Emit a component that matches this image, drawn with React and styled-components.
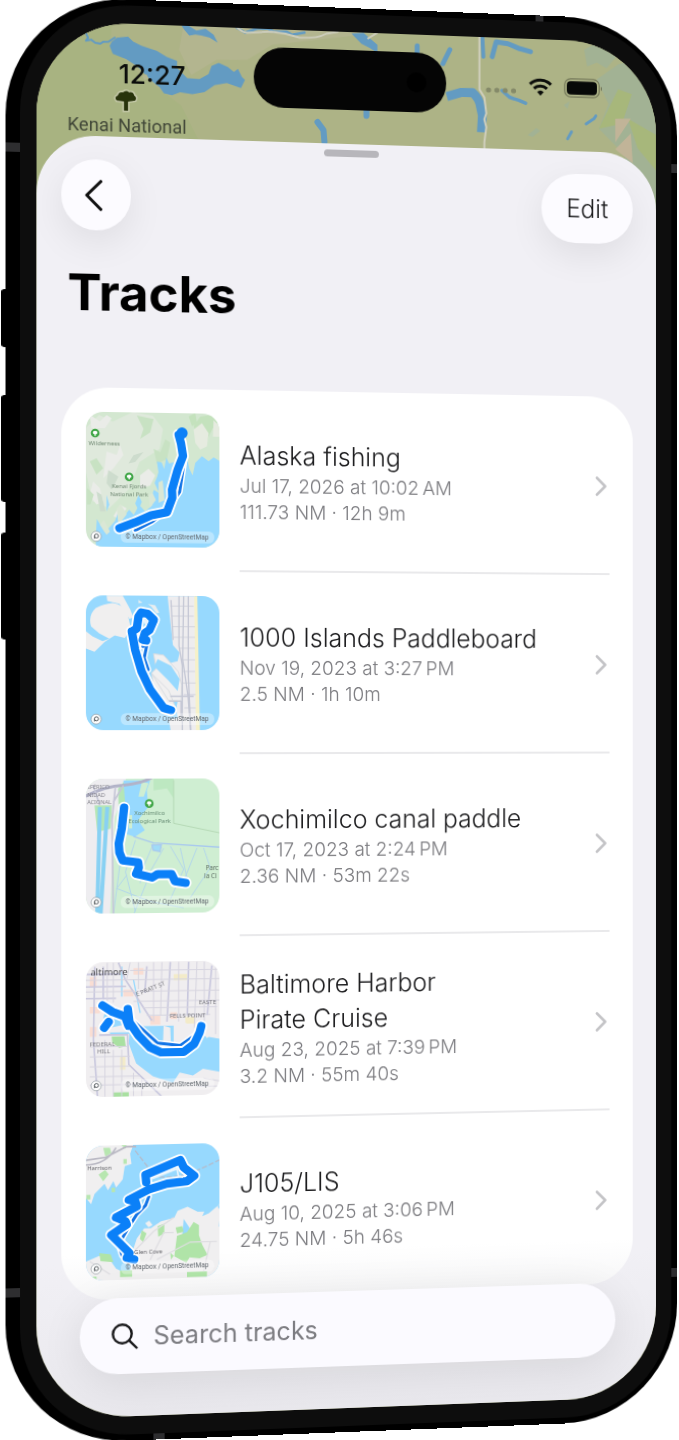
import React, { useState } from 'react'
import styled, { createGlobalStyle } from 'styled-components'

const GlobalStyle = createGlobalStyle`
  * { box-sizing: border-box; }
  body {
    margin: 0;
    background: #fff;
    font-family: Inter, "Liberation Sans", sans-serif;
    color: #1c1c1e;
  }
`

/* ---------- device ---------- */

const Stage = styled.main`
  padding: 8px 0;
  overflow: hidden;
`

const Phone = styled.div`
  position: relative;
  width: calc(100% - 6px);
  margin-left: 11px;
  padding: 6px 6px 6px 14px;
  border-radius: 118px;
  background: #000;
  transform: perspective(1274px) rotateY(4deg);
`

const Bezel = styled.div`
  padding: 18px 16px;
  border-radius: 108px;
  background: #0d0d0d;
`

const Screen = styled.div`
  position: relative;
  overflow: hidden;
  border-radius: 92px;
  background: #adb386;
`

const SideButton = styled.span`
  position: absolute;
  left: -4px;
  top: ${p => p.$top}px;
  width: 8px;
  height: ${p => p.$height}px;
  border-radius: 3px;
  background: #000;
`

const Antenna = styled.span`
  position: absolute;
  background: #2e2e30;
  ${p => p.$side === 'left' && 'left: 0; width: 14px; height: 9px;'}
  ${p => p.$side === 'right' && 'right: 0; width: 6px; height: 9px;'}
  ${p => p.$side === 'top' && 'top: 0; right: 138px; width: 8px; height: 6px;'}
  ${p => p.$side === 'bottom' && 'bottom: 0; left: 144px; width: 11px; height: 6px;'}
  ${p => p.$y && `top: ${p.$y}px;`}
`

/* ---------- status bar ---------- */

const Backdrop = styled.svg`
  position: absolute;
  top: 0;
  left: 0;
  width: 100%;
  height: 200px;
`

const StatusBar = styled.header`
  position: relative;
  display: grid;
  grid-template-columns: 1fr auto 1fr;
  align-items: center;
  padding: 18px 54px 34px 80px;
`

const Time = styled.time`
  padding-top: 4px;
  font-size: 26px;
  line-height: 30px;
  font-weight: 500;
  color: #0a0c0a;
`

const Island = styled.div`
  display: flex;
  align-items: center;
  justify-content: flex-end;
  width: 193px;
  height: 60px;
  margin-left: -28px;
  padding-right: 20px;
  border-radius: 30px;
  background: #050505;
`

const Camera = styled.span`
  width: 20px;
  height: 20px;
  border-radius: 50%;
  background: #000;
`

const Indicators = styled.div`
  display: flex;
  justify-content: flex-end;
  align-items: flex-end;
  gap: 12px;
`

/* ---------- sheet ---------- */

const Sheet = styled.section`
  position: relative;
  padding: 6px 24px 42px;
  border-radius: 58px 58px 0 0;
  background: linear-gradient(#f1f0f5 0, #f1f0f5 88%, #e9e8ed 100%);
`

const Grabber = styled.div`
  width: 55px;
  height: 7px;
  margin: 0 auto 10px;
  border-radius: 4px;
  background: #b7b6bb;
`

const Toolbar = styled.div`
  display: flex;
  justify-content: space-between;
`

const PillButton = styled.button`
  display: flex;
  align-items: center;
  justify-content: center;
  width: ${p => (p.$wide ? 94 : 68)}px;
  height: 70px;
  padding: ${p => (p.$wide ? '0' : '0 5px 0 0')};
  border: none;
  border-radius: 35px;
  background: #fcfbff;
  box-shadow: 0 12px 36px rgba(0, 0, 0, 0.08);
  font-family: inherit;
  font-size: 25px;
  font-weight: 300;
  color: #1c1c1e;
  cursor: pointer;
`

const Title = styled.h1`
  margin: 29px 6px 62px;
  font-size: 50px;
  line-height: 64px;
  font-weight: 700;
  color: #000;
`

const List = styled.ul`
  margin: 0;
  padding: 0 24px;
  list-style: none;
  border-radius: 46px;
  background: linear-gradient(#fff 0, #fff 95%, #f7f7f8 100%);
`

const Item = styled.li`
  &:last-child > a { padding-bottom: 19px; }
  &:last-child > a::after { display: none; }
`

const RowLink = styled.a`
  position: relative;
  display: flex;
  align-items: center;
  gap: 20px;
  padding: 24px 3px 24px 0;
  color: inherit;
  text-decoration: none;

  &::after {
    content: '';
    position: absolute;
    left: 151px;
    right: 0;
    bottom: 0;
    height: 2px;
    background: #e9e9eb;
  }
`

const Thumb = styled.svg`
  flex: none;
  width: 131px;
  height: 133px;
  border-radius: 17px;
`

const Details = styled.div`
  flex: 1;
  min-width: 0;
  padding-top: 2px;
`

const Name = styled.h2`
  margin: 0;
  font-size: 25px;
  line-height: 35px;
  font-weight: 300;
  color: #1c1c1e;
  white-space: pre-line;
`

const Meta = styled.p`
  margin: 0;
  font-size: 19px;
  line-height: 26px;
  font-weight: 300;
  color: #7c7c80;
`

const SearchBar = styled.label`
  position: relative;
  display: flex;
  align-items: center;
  gap: 15px;
  height: 75px;
  margin: -1px 18px 0;
  padding: 0 31px;
  border-radius: 38px;
  background: #fbfaff;
  box-shadow: 0 8px 44px rgba(0, 0, 0, 0.09);
`

const SearchInput = styled.input`
  flex: 1;
  min-width: 0;
  padding: 0;
  border: none;
  outline: none;
  background: transparent;
  font-family: inherit;
  font-size: 25px;
  color: #1c1c1e;

  &::placeholder {
    color: #7c7c81;
    opacity: 1;
  }
`

/* ---------- icons ---------- */

const BackIcon = () => (
  <svg width="17" height="31" viewBox="0 0 17 31" fill="none" stroke="#111" strokeWidth="3" strokeLinecap="round" strokeLinejoin="round" aria-hidden="true">
    <path d="M15.500 1.700 1.800 15.500l13.700 13.800" />
  </svg>
)

const ChevronIcon = () => (
  <svg width="12" height="20" viewBox="0 0 12 20" fill="none" stroke="#c3c3c6" strokeWidth="2.6" strokeLinecap="round" strokeLinejoin="round" aria-hidden="true">
    <path d="m2 1.500 8.500 8.500L2 18.500" />
  </svg>
)

const SearchIcon = () => (
  <svg width="26" height="26" viewBox="0 0 26 26" fill="none" stroke="#1a1a1c" strokeWidth="2.4" strokeLinecap="round" aria-hidden="true">
    <circle cx="10.500" cy="10.500" r="9.200" />
    <path d="m17.200 17.200 7.300 7.300" />
  </svg>
)

const WifiIcon = () => (
  <svg width="24" height="19" viewBox="0 0 24 19" fill="none" stroke="#0b0d0a" strokeWidth="3" aria-hidden="true">
    <path d="M1.200 6.600a15.500 15.500 0 0 1 21.600 0" />
    <path d="M5.300 10.900a9.700 9.700 0 0 1 13.400 0" />
    <path d="M8.600 14.300a5 5 0 0 1 6.800 0L12 18Z" fill="#0b0d0a" stroke="none" />
  </svg>
)

const BatteryIcon = () => (
  <svg width="41" height="20" viewBox="0 0 41 20" aria-hidden="true">
    <rect x="0.800" y="0.800" width="35.500" height="18.400" rx="6" fill="none" stroke="#747859" strokeWidth="1.200" />
    <rect x="3" y="3.200" width="31" height="13.600" rx="4" fill="#070907" />
    <path d="M38 7.500q2 2.500 0 5Z" fill="#62664d" />
  </svg>
)

const DotsIcon = () => (
  <svg width="32" height="10" viewBox="0 0 32 10" fill="#858a69" aria-hidden="true">
    <circle cx="3" cy="5" r="2.600" />
    <circle cx="11.500" cy="5" r="2.600" />
    <circle cx="20" cy="5" r="2.600" />
    <circle cx="28.500" cy="5" r="2.600" />
  </svg>
)

/* ---------- map behind the status bar ---------- */

const BackdropMap = () => (
  <Backdrop viewBox="0 0 620 200" preserveAspectRatio="xMinYMin slice" aria-hidden="true">
    <rect width="620" height="200" fill="#adb386" />
    <g transform="matrix(1 -0.037 0 1 -39 -19.500)">
      <path d="M30 15v190h60l110-60-20-40-40-30-30-30 5-40Z" fill="#a8b381" />
      <path d="M185 10 178 50l12 25 25-15 30 0 25-15 90-10 20-30Z" fill="#b3b58f" />
      <path d="M585 50l20-10 15 15-12 14-10-6-10 4Zm35 15 20-5 25 70v90l-30-40-10-25-25-25 10-25-12-25Z" fill="#a2b294" />
      <path d="M600 130l20-40 14 5-10 30Zm30-10 35 20v40l-25-30Z" fill="#a7b77b" />
      <path d="M617 120h16l-16 24Zm16 15 2 30-18-14Z" fill="#c1b498" />
      <path d="M540 132l-8 6-5-2 9-7Zm30-30-2 8-4-4Z" fill="#a2b294" />
      <g fill="none" stroke="#639bc2" strokeLinecap="round" strokeLinejoin="round">
        <path d="M87 34l2 4-2 3 5-1 4 3 5 1 3-2 5 0 6-4" strokeWidth="2" />
        <path d="M235 28l8 5 12-4 10 0 7 3 12 0 6 3 12-2" strokeWidth="2.500" />
        <path d="M415 46v8M448 50l-7 14" strokeWidth="5" />
        <path d="M481 38l1 19" strokeWidth="4" />
        <path d="M491 57l4-15 12 2 12 5 11 3" strokeWidth="5" />
        <path d="M501 91l8 7 9 3 7 3" strokeWidth="3.500" />
        <path d="M445 97l14-4 12 0q7 6 8 14l2 9-1 17" strokeWidth="9" strokeLinecap="butt" />
        <path d="M568 140l4-7M587 125l8-5 2-3" strokeWidth="3" />
        <path d="M315 122l6 8 1 12" strokeWidth="6" />
        <path d="M364 108v8" strokeWidth="6" />
      </g>
      <path d="M179 24l8 2 8 5 9-2 8 6 4 8-8-5-8-2-6-1-6 1-5-6Z" fill="#639bc2" />
      <path d="M349 34l12-1 8 7 6 5v8l-8-5-8-4Z" fill="#639bc2" />
      <path d="M112 42l5-4 11-1 5 5 8 4 15 5 10 6 10 4 0 7 10 10 12 1 9-5 3-8 7-3 9 4 6 5 4-3 4 8 3 3-4 8-14-5-12 2-10 7-12 2-12-2-8 3-8-2-4-6-9-7-12-13-12-8-13-5-3-8Z" fill="#639bc2" />
      <path d="M142 76l4-2 2 4-4 2Z" fill="#b3b58f" />
      <path d="M233 25q6 8 12 8l24-1 14 2 14 4q18 1 27-4l12-2" fill="none" stroke="#ccccba" strokeWidth="2" />
      <path d="M478 35v55l5 8 2 16-2 6 2 8-2 15v14" fill="none" stroke="#d0cfbd" strokeWidth="2" />
      <path d="M365 39l10-6" fill="none" stroke="#ccccba" strokeWidth="2" />
      <path
        d="M117 100q-3-3 1-5 1-4 5-3 3-3 6 0 4-1 5 3 3 2 1 5l-7 1v9h-4v-9Z"
        fill="#28330c" stroke="#c5c9a9" strokeWidth="3" paintOrder="stroke"
      />
    </g>
    <text x="30" y="107" fontFamily="Roboto, sans-serif" fontSize="18" fill="#414738">Kenai National</text>
  </Backdrop>
)

/* ---------- thumbnails ---------- */

const WATER = '#97d9fe'

const Track = ({ d, thin }) => (
  <g fill="none" strokeLinecap="round" strokeLinejoin="round">
    {thin && <path d={thin} stroke="#fff" strokeWidth="18" />}
    {thin && <path d={thin} stroke="#1173e6" strokeWidth="9" />}
    <path d={d} stroke="#fff" strokeWidth="36" />
    <path d={d} stroke="#0b80f8" strokeWidth="25" />
  </g>
)

const Park = ({ x, y }) => (
  <g>
    <circle cx={x} cy={y} r="13" fill="#3ea545" />
    <path d={`M${x} ${y - 7}q7 0 7 6 0 4-5 4v5h-4v-5q-5 0-5-4 0-6 7-6Z`} fill="#fff" />
  </g>
)

const Alaska = () => (
  <>
    <rect x="48" y="45" width="402" height="415" fill="#d3e7d0" />
    <path d="M48 100l40-40 40 20 60-30 60 10 30 40-10 60-60 40-30 80-60 60-50-20-20-90Z" fill="#dfe9dc" />
    <path d="M60 60l30 20 20-20 15 10-20 30-40 0ZM110 170l30 10 10-30 10 30-30 40-30 30Zm-40 90 20 20 10 40-20 10-20-30Zm140-20 25-20 20 20-15 30-30 10Zm-60 90 20 10-25 30-15-5Z" fill="#eaece8" />
    <path d="M200 60l20 40-10 30 30-20 10-40Zm50 100 20 10 15-40 15 10-10 50-30 15Zm-190 40 20-10 20 30-20 20Zm-8 80 20 20-10 30-10 0Z" fill="#c8e2c3" />
    <path d="M390 60l-20 30 15 40 20 20 10-30 20-40 14 0V50ZM355 60l10 30 15-10-5-30Z" fill="#c4e2bd" />
    <path d="M370 100l25-20 20 30-5 40-20 10-15-20Zm60-30 18 20v30l-20 0Z" fill="#e6ebe0" />
    <path d="M80 290l15 10 12 50-16 0ZM190 180l30-10-25 30-20 5ZM115 225l30 20-20 40-15-20Z" fill="#cddccd" />
    <path d="M450 195l-20-12-15 12-20-15-20 20-8 38-10-20-6-30-55 15-8-18-6 35-8-20-14-2 5 35-12 30 14 30-16-10-8 22 4 24-22 20-18-20-16 30-14-15-18 24-12-24-12 34-30 35-24-40-3 50v60h402Z" fill={WATER} />
    <path d="M262 240l8-30 12 40 5 50-15 20ZM205 300l10 20-10 25-10-20ZM110 300l8 30-8 20Z" fill={WATER} />
    <path d="M140 340l12-12 18 30-25 32Zm95-40 12-8 10 22-18 24Zm30-40 12-6 6 60-18 8ZM90 390l12-14 18 34-10 10Z" fill="#dae7d5" />
    <Park x={76} y={115} />
    <Park x={177} y={245} />
    <g fontSize="18" fill="#728a75" textAnchor="middle">
      <text x="103" y="151">Wilderness</text>
      <text x="177" y="280">Kenai Fjords</text>
      <text x="177" y="303">National Park</text>
    </g>
    <Track
      thin="M342 195L328 288 290 345 245 380 195 406"
      d="M325 116L332 142 338 180 322 222 305 282 306 306 290 350 243 360 195 382 148 400"
    />
    <circle cx="335" cy="111" r="17" fill="#0b80f8" />
  </>
)

const Islands = () => (
  <>
    <rect x="48" y="40" width="402" height="420" fill={WATER} />
    <path d="M78 85q22-12 50-15 30 4 44 30l10 45-18 30-30-8-30 20-30 30-26-10V155l20 15 30 15 20-8-30-16-24-20q-10-34 14-56Z" fill="#f0efef" />
    <path d="M110 48h48l22 40 10 25-12 4-30-45-36-8Z" fill="#f0efef" />
    <path d="M205 60l12 8-12 2Zm28 12 22 4 12 22-8 2-16-20Z" fill="#e8edef" />
    <path d="M292 48h82l10 412h-82l-6-40 26-4-4-30 12-60-14-60-34-12 40-10 6-26-20-22-10-90Z" fill="#eeedef" />
    <path d="M372 48h9l8 412h-12Z" fill="#f6f1c9" />
    <path d="M250 222l30 4 44 50 10 40-2 48-38-2-50-82 14-14Zm-5 60 50 50 20 50-16 12-48-60Z" fill="#f1f0f0" stroke="#d8dbe0" strokeWidth="3" />
    <path d="M262 238l40 20 26 40-6 36-28-32-42-42Z" fill={WATER} />
    <g fill="none" stroke="#c5c8d5" strokeWidth="4">
      <path d="M326 48v150l10 60v202M340 48l-3 190 16 110 8 112M354 48v240l8 172M302 60l6 120M300 350h70M296 365h36v50" />
      <path d="M300 78h70M304 108h66M306 140h68M310 172h64M326 205h48M334 240h40M336 275h38M336 310h40M340 345h36M342 385h34M330 420h50" strokeWidth="2" />
    </g>
    <Track
      thin="M218 200L230 196 222 235 234 270"
      d="M185 155L195 210 214 275 240 330 280 385 302 392M187 154L200 146 205 110 213 98 233 102 251 120 238 150 224 160 218 180 228 182"
    />
    <path d="M219 120l8-4 6 8-4 12-6-6Z" fill="#e9f4fb" />
  </>
)

const Xochimilco = () => (
  <>
    <rect x="48" y="35" width="402" height="415" fill="#cfeed2" />
    <path d="M48 35h120l-10 60-24 60-14 295H48Z" fill="#eeedf0" />
    <path d="M74 120h52l-4 70-40 10Zm70-50 20-24 14 20-12 60-20 20Z" fill="#b4e6b6" />
    <path d="M160 45h80l-10 30 4 50-30 40 20 30-30 20-30-10 4-50Z" fill={WATER} />
    <path d="M215 50l20 4-14 40-16 0ZM176 150l10 0v40l-10 0Z" fill="#cfeed2" />
    <path d="M250 40h60v60l-20-30-40 6Z" fill="#bde8c1" />
    <path d="M90 125l-8 325M112 125L92 450" stroke="#88d1f3" strokeWidth="12" fill="none" />
    <g fill="none" stroke="#a9c9ee" strokeWidth="4">
      <path d="M190 214l60 20 200 14" />
      <path d="M160 215l-10 80-20 155M196 225l-30 95 30 120M250 235l-34 80-6 40M245 240l30 8M300 244l40 70-40 90M330 250l20 90M380 250l-40 100M170 330l-30 40 100 40 100 20M230 350l-40 100M400 250l20 60-60 90M280 250l-40 70" strokeWidth="3" stroke="#b3d6ea" />
      <path d="M245 240l28 0-4 20-20-4Z" fill="#9fdcf8" />
    </g>
    <path d="M310 45v130l140 30" fill="none" stroke="#b5d8b5" strokeWidth="3" />
    <path d="M48 92q60-30 110-32 60-6 90-25" fill="none" stroke="#b2b3c8" strokeWidth="9" />
    <path d="M136 65l-10 100 4 285M160 60l-30 50M70 60l20 60" fill="none" stroke="#c5c6d6" strokeWidth="5" />
    <Park x={237} y={115} />
    <g fontSize="18" fill="#648a72" textAnchor="middle">
      <text x="238" y="150">Xochimilco</text>
      <text x="238" y="174">Ecological Park</text>
    </g>
    <g fontSize="17" fill="#85858d">
      <text x="55" y="72">IFÉRICO</text>
      <text x="52" y="95">NIDAD</text>
      <text x="52" y="117">ACIONAL</text>
    </g>
    <g fontSize="19" fill="#5c6d62">
      <text x="406" y="317">Parc</text>
      <text x="402" y="341">la Ci</text>
    </g>
    <Track d="M162 127L155 190 146 235 148 262 158 286 204 292 206 308 198 326 246 338 262 328 304 328 314 350 346 355" />
  </>
)

const Baltimore = () => (
  <>
    <rect x="48" y="40" width="402" height="420" fill="#f0eef0" />
    <path d="M60 90h20v30H60Zm0 90h30v20H60Zm100-50h30v20h-30Zm80 80h30v26h-30Zm-50-145h30v20h-30ZM60 240h20v30H60ZM300 200h20v20h-20Z" fill="#f9ddd3" />
    <path d="M310 85h40v18h-40ZM345 215h30v20h-30ZM150 330h16v40h-16Z" fill="#f3ebc9" />
    <path d="M125 270h38l4 30-20 4-20-16ZM130 438h46v14h-46Z" fill="#a9e0a1" />
    <path d="M105 192l60 14 10 26-56 12-20-20ZM180 215l40 25 90 0v50l70 12 16-30 52 10v100l-50-10-30 20-40-10-20 30-60-20-50-40-22-60Z" fill={WATER} />
    <path d="M280 240l20 6 2 52-24 0ZM340 230l24 10-14 40-24 20ZM390 250l24-20 20 30-24 20Z" fill="#f0eef0" />
    <path d="M190 100l20 100M155 60v90M120 260l60 0" stroke={WATER} strokeWidth="4" fill="none" />
    <g fill="none" stroke="#c9c8de" strokeWidth="5">
      <path d="M145 48l20 50 26 40 54 86M48 120h120M48 155h90M75 60l-4 220 12 170M88 265l84 0 4 90 50 50 50 50M300 48l-10 180M355 48l-4 160M48 82h100M230 60l-6 80M425 60l-14 150M100 60v100" />
    </g>
    <g fill="none" stroke="#d6d4e0" strokeWidth="3">
      <path d="M112 48v120M130 48v120M180 48l-10 50M205 48v80M250 48v180M275 48l-4 160M325 48v180M380 48l-8 200M402 48v180M436 48v220M48 100h400M48 135h400M180 72h268M190 165h258M220 185h220M230 208h190M60 300h110M60 330h120M60 360h120M60 390h150M60 415h170M105 280v170M130 310v140M155 310v140M190 380v70M215 400v50M400 400l50 10M380 425l70 0" />
    </g>
    <g fill="#77777e">
      <text x="62" y="85" fontSize="28" fill="#4b4b50">altimore</text>
      <text x="200" y="151" fontSize="18" transform="rotate(-22 200 151)">E PRATT ST</text>
      <text x="386" y="177" fontSize="18">EASTE</text>
      <text x="298" y="217" fontSize="18">FELLS POINT</text>
      <text x="60" y="298" fontSize="18">FEDERAL</text>
      <text x="82" y="320" fontSize="18">HILL</text>
    </g>
    <Track
      thin="M180 215L215 248 262 292 330 300 385 262"
      d="M98 176L128 196 165 210 175 238M173 188L178 228 205 268 240 305 272 320 340 320 372 296 388 262 393 243M103 243L116 226"
    />
  </>
)

const LongIsland = () => (
  <>
    <rect x="48" y="45" width="402" height="420" fill={WATER} />
    <path d="M48 50h142l-10 30 4 30-20 6-6 40-20 24-8-20-16 28-10-20-30 30-10 30-16-20Z" fill="#f0eff0" />
    <path d="M100 60h20l4 16-18 10Zm-14 80 20-14 10 14-16 20ZM150 50h20l-4 14ZM50 200h12v14H50ZM160 95h10v14h-10ZM125 180h10v14h-10Z" fill="#b7e6b0" />
    <path d="M190 365l10-30 22-30 20 0 30-20 40-10 10-20 30-12 30 16 20 0-6 14 20-8 24-20 10 10-4 50 24 30v140H120l-40-20-32 5v-60l40-16 30 10 20 30 40 20Z" fill="#f0eff0" />
    <path d="M448 235l-16 40-10 40-20-6 18-24ZM225 290l12-8 10 14-12 6Z" fill="#f0eff0" />
    <path d="M340 280l20 30-10 40-14-20Z" fill={WATER} />
    <path d="M320 330l30-10 20-30 16 10 0 30 10 30 16 30-24 10-30-4-10 16-36-20ZM262 300l20-8 0 30-18 10ZM316 305l20-4 4 18-20 4ZM215 310l14 10-10 26-10-10ZM88 376l34 4 8 24-38-4ZM150 430h36v20h-36ZM60 446h20v12H60ZM300 380l10 10-8 12ZM350 440h60v16h-60Z" fill="#b0e4a8" />
    <path d="M48 96l60-8 60-30 30 0M48 110q60 0 90-50" fill="none" stroke="#b9b8c3" strokeWidth="5" />
    <path d="M190 375l60-60 60-40M240 400l40-80 30 0M260 400l100-50 80 0M420 350l-20 90M60 400l60 40" fill="none" stroke="#dfdee2" strokeWidth="4" />
    <path d="M195 70q30 40 56 74 60 30 196-40" fill="none" stroke="#b3bccc" strokeWidth="4" strokeDasharray="16 6" />
    <Track
      thin="M236 210L226 236 200 262 182 290 158 330 148 360 156 385"
      d="M192 398L170 392 178 378 124 322 170 292 166 282 138 270 200 238 196 224 176 218 236 188 290 172 350 166 372 150 340 124 330 102 226 144 228 166"
    />
    <path d="M246 156l74-28 4 22 14 4" stroke="#e9f5fd" strokeWidth="5" fill="none" />
    <g fontSize="18" fill="#66666b">
      <text x="52" y="126">Harrison</text>
      <text x="192" y="381">Glen Cove</text>
    </g>
  </>
)

const Attribution = ({ y }) => (
  <g>
    <rect x="152" y={y - 18} width="280" height="36" rx="16" fill="#fff" fillOpacity="0.35" />
    <text x="166" y={y + 6} fontSize="20" fontFamily="Roboto, sans-serif" fill="#60676d">© Mapbox / OpenStreetMap</text>
    <circle cx="79" cy={y} r="15" fill="#fff" stroke="#8d959b" strokeWidth="2" />
    <circle cx="80" cy={y - 1} r="6" fill="none" stroke="#555b60" strokeWidth="3" />
    <path d={`M74 ${y + 7}v-8`} stroke="#555b60" strokeWidth="3" />
  </g>
)

const tracks = [
  { id: 'alaska', name: 'Alaska fishing', date: 'Jul 17, 2026 at 10:02\u202fAM', stats: '111.73 NM · 12h 9m', Scene: Alaska, top: 51, mark: 425 },
  { id: 'islands', name: '1000 Islands Paddleboard', date: 'Nov 19, 2023 at 3:27\u202fPM', stats: '2.5 NM · 1h 10m', Scene: Islands, top: 47, mark: 419 },
  { id: 'xochimilco', name: 'Xochimilco canal paddle', date: 'Oct 17, 2023 at 2:24\u202fPM', stats: '2.36 NM · 53m 22s', Scene: Xochimilco, top: 40, mark: 411 },
  { id: 'baltimore', name: 'Baltimore Harbor\nPirate Cruise', date: 'Aug 23, 2025 at 7:39\u202fPM', stats: '3.2 NM · 55m 40s', Scene: Baltimore, top: 46, mark: 417 },
  { id: 'j105', name: 'J105/LIS', date: 'Aug 10, 2025 at 3:06\u202fPM', stats: '24.75 NM · 5h 46s', Scene: LongIsland, top: 53, mark: 423 },
]

function TrackRow({ track }) {
  const { Scene } = track
  return (
    <Item>
      <RowLink href={`#${track.id}`}>
        <Thumb viewBox={`48 ${track.top} 400 405`} preserveAspectRatio="xMidYMid slice" fontFamily="'Noto Sans', sans-serif" aria-hidden="true">
          <Scene />
          <Attribution y={track.mark} />
        </Thumb>
        <Details>
          <Name>{track.name}</Name>
          <Meta>{track.date}</Meta>
          <Meta>{track.stats}</Meta>
        </Details>
        <ChevronIcon />
      </RowLink>
    </Item>
  )
}

function App() {
  const [query, setQuery] = useState('')
  const shown = tracks.filter(t => t.name.toLowerCase().includes(query.toLowerCase()))

  return (
    <Stage>
      <GlobalStyle />
      <Phone>
        <SideButton $top={289} $height={57} />
        <SideButton $top={393} $height={105} />
        <SideButton $top={528} $height={105} />
        <Antenna $side="left" $y={145} />
        <Antenna $side="left" $y={1270} />
        <Antenna $side="right" $y={146} />
        <Antenna $side="right" $y={1270} />
        <Antenna $side="top" />
        <Antenna $side="bottom" />
        <Bezel>
          <Screen>
            <BackdropMap />
            <StatusBar>
              <Time>12:27</Time>
              <Island><Camera /></Island>
              <Indicators>
                <DotsIcon />
                <WifiIcon />
                <BatteryIcon />
              </Indicators>
            </StatusBar>
            <Sheet>
              <Grabber />
              <Toolbar>
                <PillButton type="button" aria-label="Back"><BackIcon /></PillButton>
                <PillButton type="button" $wide>Edit</PillButton>
              </Toolbar>
              <Title>Tracks</Title>
              <List>
                {shown.map(track => <TrackRow key={track.id} track={track} />)}
              </List>
              <SearchBar>
                <SearchIcon />
                <SearchInput
                  type="text"
                  aria-label="Search tracks"
                  placeholder="Search tracks"
                  value={query}
                  onChange={e => setQuery(e.target.value)}
                />
              </SearchBar>
            </Sheet>
          </Screen>
        </Bezel>
      </Phone>
    </Stage>
  )
}

export default App
